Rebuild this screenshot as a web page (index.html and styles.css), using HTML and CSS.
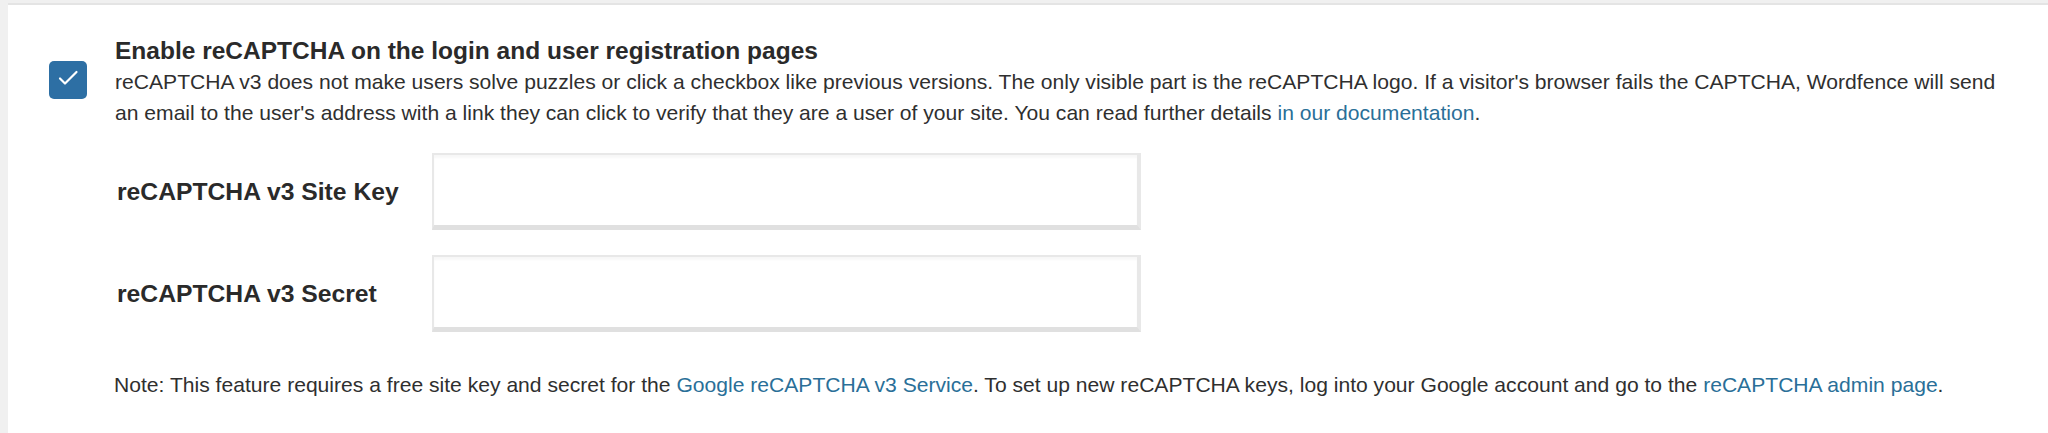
FILE: index.html
```html
<!DOCTYPE html>
<html lang="en">
<head>
<meta charset="utf-8">
<title>reCAPTCHA options</title>
<link rel="stylesheet" href="styles.css">
</head>
<body>
<div class="page">
  <div class="panel">
    <div class="option">
      <span class="checkbox" role="checkbox" aria-checked="true">
        <svg width="38" height="38" viewBox="0 0 38 38"><path d="M11 17.5 L16 22.5 L27.5 11" fill="none" stroke="#fff" stroke-width="2.2" stroke-linecap="round" stroke-linejoin="round"/></svg>
      </span>
      <div class="option-text">
        <div class="option-title">Enable reCAPTCHA on the login and user registration pages</div>
        <p class="option-desc">reCAPTCHA v3 does not make users solve puzzles or click a checkbox like previous versions. The only visible part is the reCAPTCHA logo. If a visitor's browser fails the CAPTCHA, Wordfence will send an email to the user's address with a link they can click to verify that they are a user of your site. You can read further details <a href="#">in our documentation</a>.</p>
      </div>
    </div>
    <div class="fields">
      <div class="field">
        <label class="field-label">reCAPTCHA v3 Site Key</label>
        <input class="field-input" type="text">
      </div>
      <div class="field">
        <label class="field-label">reCAPTCHA v3 Secret</label>
        <input class="field-input" type="text">
      </div>
    </div>
    <p class="note">Note: This feature requires a free site key and secret for the <a href="#">Google reCAPTCHA v3 Service</a>. To set up new reCAPTCHA keys, log into your Google account and go to the <a href="#">reCAPTCHA admin page</a>.</p>
  </div>
</div>
</body>
</html>
```
FILE: styles.css
```css
html, body {
  margin: 0;
  padding: 0;
  background: #ffffff;
}
body {
  font-family: "Liberation Sans", Arial, Helvetica, sans-serif;
  color: #2b2b2b;
}
.page {
  display: flex;
  min-height: 433px;
  background: #f0f0f0;
  padding-left: 8px;
  box-sizing: border-box;
}
.panel {
  flex: 1;
  background: #ffffff;
  margin-top: 3px;
  border-top: 2px solid #e4e4e4;
  padding: 30px 0 0 0;
}
.option {
  display: flex;
  align-items: flex-start;
  padding-left: 41px;
}
.checkbox {
  flex: none;
  width: 38px;
  height: 38px;
  border-radius: 5px;
  background: #2d6fa4;
  margin-top: 26px;
  margin-right: 28px;
  display: block;
}
.checkbox svg { display: block; }
.option-text {
  width: 1890px;
}
.option-title {
  font-size: 24.5px;
  font-weight: bold;
  line-height: 31px;
  color: #2a2a2a;
}
.option-desc {
  margin: 0;
  font-size: 21.1px;
  line-height: 31px;
  color: #2f2f2f;
}
a {
  color: #2a6f98;
  text-decoration: none;
}
.fields {
  display: flex;
  flex-direction: column;
  gap: 25px;
  margin-top: 25px;
  padding-left: 109px;
}
.field {
  display: flex;
  align-items: center;
}
.field-label {
  width: 315px;
  font-size: 24.7px;
  font-weight: bold;
  color: #2a2a2a;
}
.field-input {
  box-sizing: border-box;
  width: 709px;
  height: 77px;
  margin: 0;
  border: 2px solid #e8e8e8;
  border-bottom: 5px solid #e0e0e0;
  border-right-width: 4px;
  border-radius: 0;
  background: #fff;
  box-shadow: inset 0 3px 2px rgba(0,0,0,0.03);
  outline: none;
}
.note {
  margin: 37px 0 0 0;
  padding-left: 106px;
  font-size: 21.1px;
  line-height: 31px;
  color: #2f2f2f;
}
```
